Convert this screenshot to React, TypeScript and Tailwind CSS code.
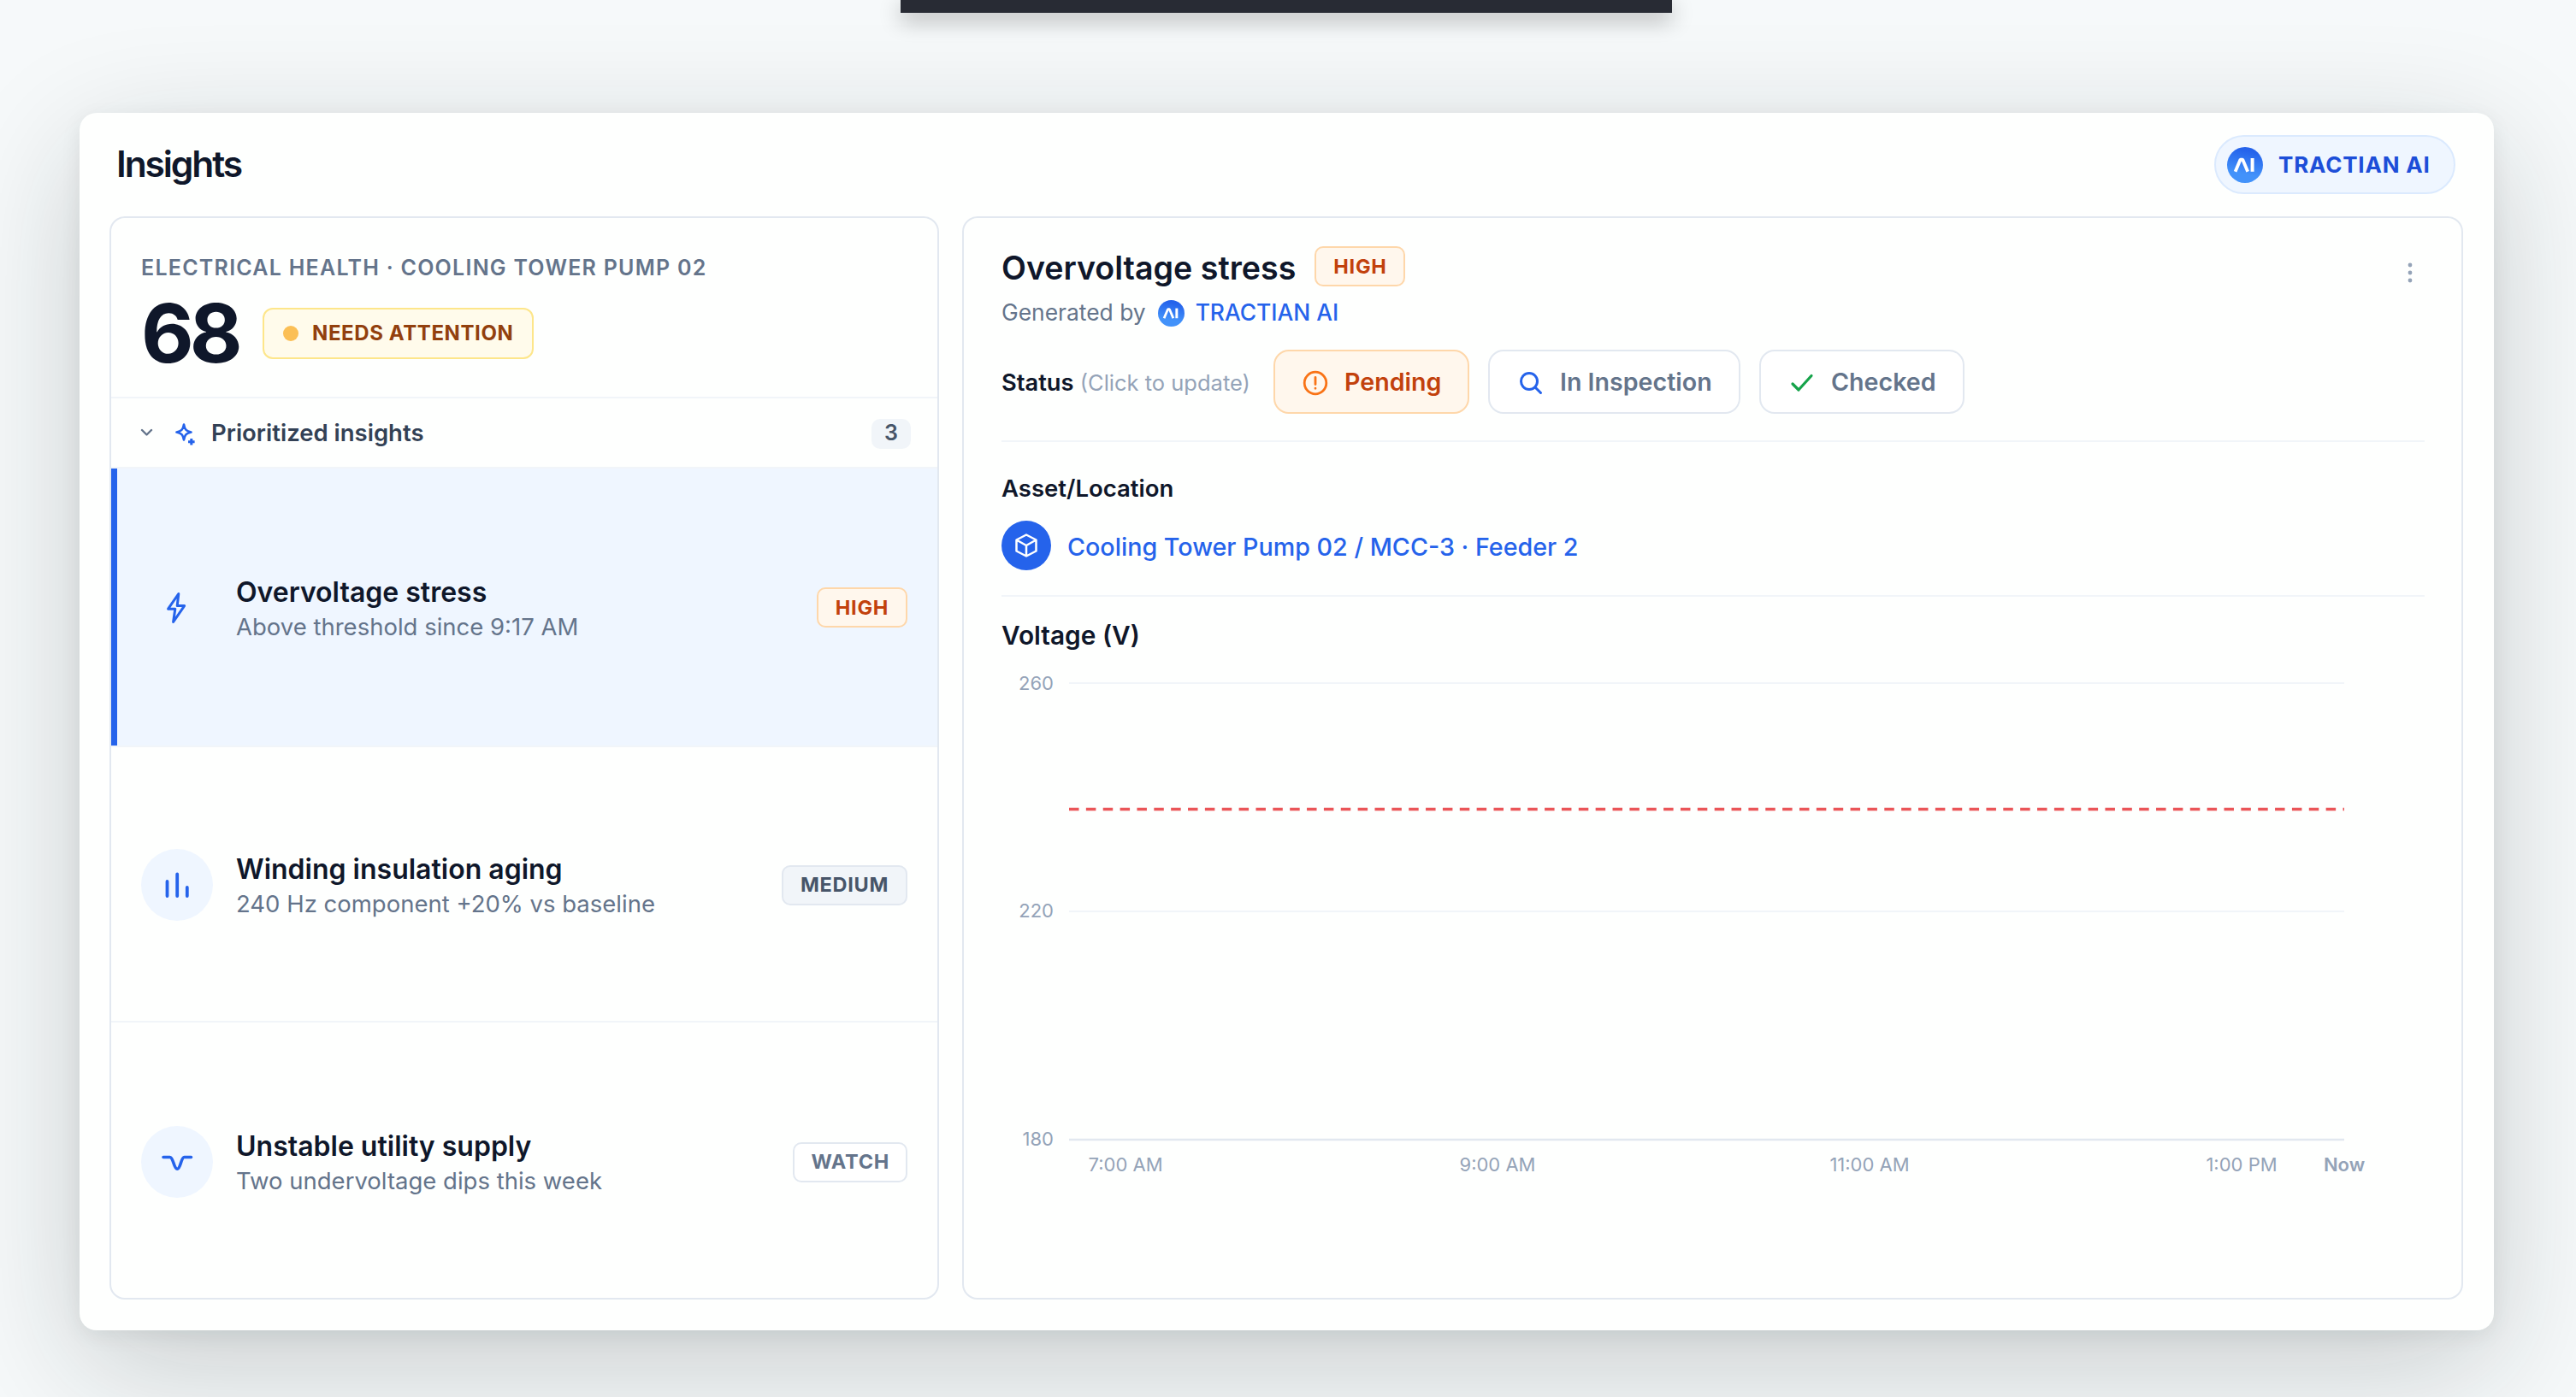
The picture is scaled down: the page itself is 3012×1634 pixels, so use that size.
import type { ReactNode } from "react";

const sans = "font-['Inter',sans-serif]";

function AiMark({ id, className }: { id: string; className: string }) {
  return (
    <svg viewBox="0 0 42 42" className={className} fill="none">
      <defs>
        <linearGradient id={id} x1="25" y1="0" x2="17" y2="42" gradientUnits="userSpaceOnUse">
          <stop offset="0.1" stopColor="#2563eb" />
          <stop offset="0.75" stopColor="#4292fa" />
        </linearGradient>
      </defs>
      <circle cx="21" cy="21" r="21" fill={`url(#${id})`} />
      <path d="M9.6 28.8L15.6 14.6H18.2L24.2 28.8" stroke="#fff" strokeWidth="3.8" strokeLinejoin="bevel" />
      <path d="M29.6 13V28.8" stroke="#fff" strokeWidth="4" />
    </svg>
  );
}

function Badge({ children, tone }: { children: ReactNode; tone: "high" | "medium" | "watch" }) {
  const tones = {
    high: "border-[#fed7aa] bg-[#fff7ed] text-[#c2410c] px-5",
    medium: "border-[#e2e8f0] bg-[#f1f5f9] text-[#475569] px-5",
    watch: "border-[#e2e8f0] bg-white text-[#64748b] px-[19px]",
  };
  return (
    <span
      className={`flex h-[47px] shrink-0 items-center rounded-[10px] border-2 text-[23.5px] leading-none font-bold tracking-[0.7px] ${tones[tone]}`}
    >
      {children}
    </span>
  );
}

const insights = [
  {
    title: "Overvoltage stress",
    detail: "Above threshold since 9:17 AM",
    label: "HIGH",
    tone: "high" as const,
    selected: true,
    row: "h-[326px] shrink-0 pt-px bg-[#eff6ff]",
    icon: <path d="M22.8 4.5L10.6 22.2H18.8L16.6 37.5L29.6 18.6H21.2Z" strokeWidth="3" />,
  },
  {
    title: "Winding insulation aging",
    detail: "240 Hz component +20% vs baseline",
    label: "MEDIUM",
    tone: "medium" as const,
    selected: false,
    row: "flex-1 pt-[2px]",
    icon: <path d="M9.5 17V34M21.2 8.5V34M32.8 24V34" strokeWidth="3.8" />,
  },
  {
    title: "Unstable utility supply",
    detail: "Two undervoltage dips this week",
    label: "WATCH",
    tone: "watch" as const,
    selected: false,
    row: "flex-1 pt-[4px]",
    icon: <path d="M5 15.5H12.5C17 15.5 17 29.3 21.2 29.3S25.5 15.5 29.5 15.5H37.5" strokeWidth="3.6" />,
  },
];

function InsightsPanel() {
  return (
    <section className="flex w-[970px] shrink-0 flex-col overflow-hidden rounded-[18px] border-2 border-[#e2e8f0]">
      <div className="h-[209px] shrink-0 pt-[42px] pl-[35px]">
        <div className="text-[25px] leading-[32px] font-semibold tracking-[1.25px] whitespace-nowrap text-[#64748b]">
          ELECTRICAL HEALTH · COOLING TOWER PUMP 02
        </div>
        <div className="mt-[14px] flex items-center">
          <div className="w-[142px] text-[95px] leading-[94px] font-bold tracking-[-5px] text-[#0f172a]">68</div>
          <div className="flex h-[60px] items-center rounded-[12px] border-2 border-[#fde68a] bg-[#fffbeb] pr-[22px] pl-[22px]">
            <span className="size-[18px] rounded-full bg-[#fbbf55]" />
            <span className="ml-[16px] text-[24px] font-bold tracking-[0.6px] text-[#92400e]">NEEDS ATTENTION</span>
          </div>
        </div>
      </div>
      <div className="flex h-[82px] shrink-0 items-center border-t-2 border-[#f1f5f9] pt-[2px] pr-[31px] pl-[32px]">
        <svg viewBox="0 0 20 20" className="size-[20px]" fill="none" stroke="#64748b" strokeWidth="2.4" strokeLinecap="round" strokeLinejoin="round">
          <path d="M4 6L9.500 11.500L15 6" />
        </svg>
        <svg viewBox="0 0 26 28" className="ml-[22px] h-[28px] w-[26px]" fill="none" stroke="#2563eb" strokeWidth="2.6" strokeLinejoin="round">
          <path d="M11 3.5C12 9.5 14 11.3 19.5 12.5C14 13.7 12 15.5 11 21.5C10 15.5 8 13.7 2.5 12.5C8 11.3 10 9.5 11 3.5Z" />
          <path d="M19.8 20V27.5M16 23.8H23.6" strokeWidth="3" />
        </svg>
        <span className="ml-[17px] text-[27.5px] font-semibold text-[#334155]">Prioritized insights</span>
        <span className="ml-auto flex h-[35px] w-[46px] items-center justify-center rounded-[10px] bg-[#f1f5f9] text-[25px] font-semibold text-[#475569]">
          3
        </span>
      </div>
      {insights.map((item) => (
        <div
          key={item.title}
          className={`relative flex items-center border-t-2 border-[#f1f5f9] pr-[35px] pl-[35px] ${item.row}`}
        >
          {item.selected && <span className="absolute inset-y-0 left-0 w-[7px] bg-[#2563eb]" />}
          <span className="flex size-[84px] items-center justify-center rounded-full bg-[#eff6ff]">
            <svg viewBox="0 0 42 42" className="size-[42px]" fill="none" stroke="#2563eb" strokeLinecap="round" strokeLinejoin="round">
              {item.icon}
            </svg>
          </span>
          <div className="ml-[27px] flex flex-col pt-[4px]">
            <span className="text-[32px] leading-[40px] font-semibold text-[#0f172a]">{item.title}</span>
            <span className="text-[27.5px] leading-[40px] text-[#64748b]">{item.detail}</span>
          </div>
          <div className="ml-auto">
            <Badge tone={item.tone}>{item.label}</Badge>
          </div>
        </div>
      ))}
    </section>
  );
}

function StatusButton({ icon, label, active, width }: { icon: ReactNode; label: string; active?: boolean; width: string }) {
  return (
    <button
      className={`flex h-[75px] items-center rounded-[18px] border-2 pt-[2px] text-[28.6px] font-semibold whitespace-nowrap ${width} ${
        active ? "border-[#fed7aa] bg-[#fff7ed] pl-[31px] text-[#c2410c]" : "border-[#e2e8f0] bg-white pl-[32px] text-[#64748b]"
      }`}
    >
      <svg viewBox="0 0 32 32" className="mr-[18px] size-[32px]" fill="none" strokeLinecap="round" strokeLinejoin="round">
        {icon}
      </svg>
      {label}
    </button>
  );
}

function VoltageChart() {
  const yLabels = [
    { text: "260", y: 50 },
    { text: "220", y: 316 },
    { text: "180", y: 583 },
  ];
  const xLabels = [
    { text: "7:00 AM", x: 145 },
    { text: "9:00 AM", x: 580 },
    { text: "11:00 AM", x: 1015 },
    { text: "1:00 PM", x: 1450 },
  ];
  return (
    <svg viewBox="0 0 1664 640" className="h-[640px] w-[1664px]" fontSize="22" fill="#94a3b8">
      <g strokeWidth="2">
        <path d="M79 42H1570M79 309H1570" stroke="#f1f5f9" />
        <path d="M79 576H1570" stroke="#e2e8f0" strokeWidth="2.5" />
        <path d="M79 189.5H1570" stroke="#ea5558" strokeWidth="3.4" strokeDasharray="11.5 8.36" />
      </g>
      {yLabels.map((l) => (
        <text key={l.text} x="61" y={l.y} textAnchor="end">
          {l.text}
        </text>
      ))}
      {xLabels.map((l) => (
        <text key={l.text} x={l.x} y="612.5" textAnchor="middle">
          {l.text}
        </text>
      ))}
      <text x="1570" y="612.5" textAnchor="middle" fontWeight="600">
        Now
      </text>
    </svg>
  );
}

function DetailPanel() {
  return (
    <section className="flex flex-1 flex-col rounded-[18px] border-2 border-[#e2e8f0] pr-[43px] pl-[44px]">
      <div className="flex h-[262px] shrink-0 flex-col border-b-2 border-[#f1f5f9]">
        <div className="mt-[33px] flex justify-between">
          <div className="flex h-[50px] items-start">
            <h2 className="mt-[2px] text-[37.6px] leading-[48px] font-semibold text-[#0f172a]">Overvoltage stress</h2>
            <div className="ml-[22px]">
              <Badge tone="high">HIGH</Badge>
            </div>
          </div>
          <svg viewBox="0 0 24 32" className="mt-[15px] mr-[5px] h-[32px] w-[24px]" fill="#94a3b8">
            <circle cx="12" cy="7" r="2.4" />
            <circle cx="12" cy="16" r="2.4" />
            <circle cx="12" cy="25" r="2.4" />
          </svg>
        </div>
        <div className="mt-[10px] flex h-[36px] items-center text-[26.4px]">
          <span className="text-[#64748b]">Generated by</span>
          <AiMark id="mark-small" className="mr-[13px] ml-[14px] size-[31px]" />
          <span className="font-medium text-[#2563eb]">TRACTIAN AI</span>
        </div>
        <div className="mt-[25px] flex items-center">
          <div className="w-[318px] pt-[3px] text-[25.5px] whitespace-nowrap text-[#94a3b8]">
            <span className="text-[27.3px] font-semibold text-[#0f172a]">Status</span> (Click to update)
          </div>
          <div className="flex gap-[22px]">
            <StatusButton
              active
              label="Pending"
              width="w-[229px]"
              icon={
                <g stroke="#f97316" strokeWidth="2.8">
                  <circle cx="16" cy="16" r="12.8" />
                  <path d="M16 9.5V17.5M16 22.2V22.3" />
                </g>
              }
            />
            <StatusButton
              label="In Inspection"
              width="w-[295px]"
              icon={
                <g stroke="#2563eb" strokeWidth="3">
                  <circle cx="14" cy="14" r="9.5" />
                  <path d="M21 21L27.5 27.5" />
                </g>
              }
            />
            <StatusButton
              label="Checked"
              width="w-[240px]"
              icon={<path d="M5 17L12 24L27 7.5" stroke="#16a34a" strokeWidth="3.2" />}
            />
          </div>
        </div>
      </div>
      <div className="flex h-[181px] shrink-0 flex-col border-b-2 border-[#f1f5f9] pt-[36px]">
        <h3 className="text-[27.5px] leading-[36px] font-semibold text-[#0f172a]">Asset/Location</h3>
        <div className="mt-[20px] flex items-center">
          <span className="flex size-[58px] items-center justify-center rounded-full bg-[#2563eb]">
            <svg viewBox="0 0 32 32" className="size-[32px]" fill="none" stroke="#fff" strokeWidth="2.5" strokeLinejoin="round">
              <path d="M16 3.5L27.5 9.5V22.5L16 28.5L4.5 22.5V9.5ZM4.5 9.5L16 16L27.5 9.5M16 16V28.5" />
            </svg>
          </span>
          <span className="ml-[19px] pt-[3px] text-[28.7px] font-medium text-[#2563eb]">Cooling Tower Pump 02 / MCC-3 · Feeder 2</span>
        </div>
      </div>
      <h3 className="mt-[26px] text-[29.8px] leading-[38px] font-semibold text-[#0f172a]">Voltage (V)</h3>
      <div className="-mt-[5px]">
        <VoltageChart />
      </div>
    </section>
  );
}

export default function App() {
  return (
    <div className={`relative h-[1634px] w-[3012px] overflow-hidden bg-[#f6f9fa] pt-[132px] pl-[93px] ${sans}`}>
      <main className="flex h-[1424px] w-[2823px] flex-col rounded-[20px] bg-[#fefffe] pr-[36px] pb-[36px] pl-[35px] shadow-[0_42px_150px_rgba(20,28,32,0.2),0_6px_24px_rgba(20,28,32,0.07)]">
        <header className="flex h-[121px] shrink-0 items-center justify-between pr-[9px] pl-[8px]">
          <h1 className="-mt-[2px] text-[42.5px] font-semibold tracking-[-2.1px] text-[#0f172a]">Insights</h1>
          <div className="flex h-[69px] w-[282px] items-center rounded-full border-2 border-[#dbeafe] bg-[#eff6ff] pl-[13px]">
            <AiMark id="mark-large" className="size-[42px]" />
            <span className="ml-[18px] text-[26px] font-bold tracking-[0.8px] text-[#1d4ed8]">TRACTIAN AI</span>
          </div>
        </header>
        <div className="flex min-h-0 flex-1 gap-[27px]">
          <InsightsPanel />
          <DetailPanel />
        </div>
      </main>
      <div className="absolute top-0 left-[1053px] h-[15px] w-[902px] bg-[#282b34] shadow-[0_8px_26px_rgba(0,0,0,0.32)]" />
    </div>
  );
}
